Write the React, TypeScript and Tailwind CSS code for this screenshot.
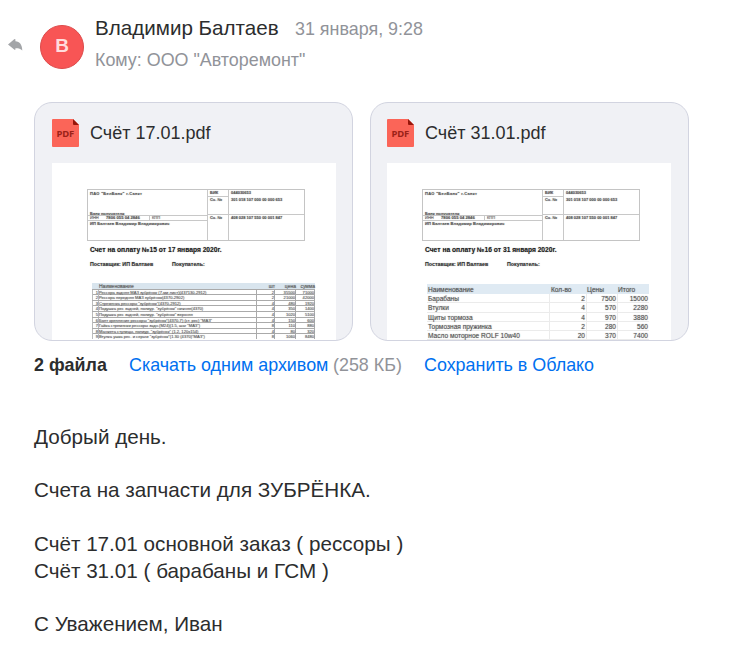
import React from "react";

const orderRows: string[][] = [
  ["1", "Рессора задняя МАЗ зубрёнок (7-ми лист)(437130-2912)", "2", "35500", "71000"],
  ["2", "Рессора передняя МАЗ зубрёнок(4370-2902)", "2", "21000", "42000"],
  ["3", "Стремянка рессоры \"зубрёнок\"(4370-2912)", "4", "480", "1920"],
  ["4", "Подушка рес задней, полиур. \"зубрёнок\" нижняя(4370)", "4", "350", "1400"],
  ["5", "Подушка рес задней, полиур. \"зубрёнок\" верхняя", "4", "1020", "5100"],
  ["6", "Болт крепления рессоры \"зубрёнок\"(4370-7) (ст. рес) \"МАЗ\"", "4", "150", "600"],
  ["7", "Гайка стремянки рессоры задн.(М24)(1.5, шаг \"МАЗ\")", "8", "110", "880"],
  ["8", "Манжета ступицы, полиур. \"зубрёнок\" (1.2, 120x154)", "4", "80", "320"],
  ["9", "Втулка ушка рес. и серьги \"зубрёнок\"(1.30 (4370)\"МАЗ\")", "8", "1060", "8480"],
];

const partsRows: string[][] = [
  ["Барабаны", "2", "7500", "15000"],
  ["Втулки", "4", "570", "2280"],
  ["Щиты тормоза", "4", "970", "3880"],
  ["Тормозная пружинка", "2", "280", "560"],
  ["Масло моторное ROLF 10w40", "20", "370", "7400"],
];

function BankTable() {
  const small = "text-[4px] leading-[5px] font-bold text-[#555]";
  return (
    <div className="ml-[35px] flex h-[52px] w-[218px] whitespace-nowrap border border-[#c4c4c4]">
      <div className="flex w-[120px] flex-col border-r border-[#c8c8c8]">
        <div className={`flex h-[25px] flex-col justify-between pl-[2px] ${small}`}>
          <span className="pt-[1px] tracking-[0.3px]">ПАО "БелБанк" г.Санкт</span>
          <span className="-mb-px tracking-[0.05px]">Банк получателя</span>
        </div>
        <div className={`flex h-[6px] shrink-0 border-y border-[#c8c8c8] ${small}`}>
          <span className="w-[18px] pl-[2px] font-normal leading-[4px]">ИНН</span>
          <span className="w-[43px] text-[4.2px] leading-[4px]">7806 055 04 2846</span>
          <span className="border-l border-[#c8c8c8] pl-[2px] font-normal leading-[4px]">КПП</span>
        </div>
        <span className={`pl-[2px] tracking-[0.1px] ${small}`}>ИП Балтаев Владимир Владимирович</span>
      </div>
      <div className={`flex w-[21px] flex-col border-r border-[#c8c8c8] ${small}`}>
        <span className="h-[7px] border-b border-[#c8c8c8] pl-[2px]">БИК</span>
        <span className="h-[18px] border-b border-[#c8c8c8] pl-[2px]">Сч. №</span>
        <span className="pl-[2px]">Сч. №</span>
      </div>
      <div className={`flex flex-1 flex-col ${small}`}>
        <span className="h-[7px] pl-[2px]">044030653</span>
        <span className="h-[18px] border-b border-[#c8c8c8] pl-[2px]">301 018 107 000 00 000 653</span>
        <span className="pl-[2px]">408 028 107 550 00 001 847</span>
      </div>
    </div>
  );
}

function OrderTable() {
  return (
    <div className="ml-[40px] mt-[14px] w-[223px] text-[5px] text-[#555]">
      <div className="grid h-[5.6px] grid-cols-[7px_158px_18px_21px_19px] bg-[#d9e5ee] leading-[6px]">
        <span />
        <span>Наименование</span>
        <span className="text-right">шт</span>
        <span className="text-right">цена</span>
        <span className="text-right">сумма</span>
      </div>
      {orderRows.map((r) => (
        <div
          key={r[0]}
          className="grid h-[5.6px] grid-cols-[7px_158px_18px_21px_19px] whitespace-nowrap border-t border-[#aaa] text-[4.1px] leading-[5px]"
        >
          <span className="border-x border-[#bbb] text-right">{r[0]}</span>
          <span className="overflow-hidden border-r border-[#aaa]">{r[1]}</span>
          <span className="border-r border-[#aaa] text-right">{r[2]}</span>
          <span className="border-r border-[#aaa] text-right">{r[3]}</span>
          <span className="border-r border-[#aaa] text-right">{r[4]}</span>
        </div>
      ))}
    </div>
  );
}

function PartsTable() {
  return (
    <div className="ml-[40px] mt-[15px] w-[222px] text-[6.6px] text-[#555]">
      <div className="grid h-[10px] grid-cols-[123px_37px_31px_31px] bg-[#dfeaf3] leading-[11px]">
        <span className="pl-px">Наименование</span>
        <span className="pl-px">Кол-во</span>
        <span>Цены</span>
        <span>Итого</span>
      </div>
      {partsRows.map((r) => (
        <div
          key={r[0]}
          className="grid h-[9.3px] grid-cols-[123px_37px_31px_31px] whitespace-nowrap border-b border-[#ebebeb] leading-[10px]"
        >
          <span className="border-r border-[#ebebeb] pl-px">{r[0]}</span>
          <span className="border-r border-[#ebebeb] pr-px text-right">{r[1]}</span>
          <span className="border-r border-[#ebebeb] pr-px text-right">{r[2]}</span>
          <span className="pr-px text-right">{r[3]}</span>
        </div>
      ))}
    </div>
  );
}

function PdfIcon() {
  return (
    <svg width="27" height="28" viewBox="0 0 27 28" className="shrink-0">
      <path d="M1 0H21L27 6V27a1 1 0 0 1-1 1H1a1 1 0 0 1-1-1V1a1 1 0 0 1 1-1Z" fill="#fb6558" />
      <path d="M21 0L27 6H22a1 1 0 0 1-1-1Z" fill="#97160b" />
      <text x="4.6" y="17.6" textLength="17.6" className="fill-[#9c2218] font-['Noto_Sans',sans-serif] text-[9.5px] font-bold">
        PDF
      </text>
    </svg>
  );
}

function Attachment({ name, title, pad, children }: { name: string; title: string; pad: string; children: React.ReactNode }) {
  return (
    <div className={`h-[239px] w-[319px] overflow-hidden rounded-[18px] border border-[#d2d4e0] bg-[#f0f1f5] ${pad}`}>
      <div className="flex h-[60px] items-center pb-px">
        <PdfIcon />
        <span className="ml-[11px] text-[18px] leading-[24px]">{name}</span>
      </div>
      <div className="h-[177px] w-[284px] overflow-hidden bg-white">
        <div className="pt-[26px] [text-shadow:0_0_1px_rgba(60,60,60,0.55)]">
          <BankTable />
          <div className="ml-[38px] mt-[4px] whitespace-nowrap text-[6.7px] leading-[9px] font-bold text-[#222]">{title}</div>
          <div className="ml-[38px] mt-[6px] flex whitespace-nowrap text-[5.3px] leading-[9px] font-bold text-[#333]">
            <span className="w-[82px]">Поставщик: ИП Балтаев</span>
            <span>Покупатель:</span>
          </div>
          {children}
        </div>
      </div>
    </div>
  );
}

export default function App() {
  return (
    <main className="h-[661px] w-[752px] overflow-hidden bg-white font-['Liberation_Sans',Arial,sans-serif] text-[#2c2d2e]">
      <header className="flex h-[102px] pl-[8px] pt-[14px]">
        <svg width="15" height="13" viewBox="0 0 15 13" className="mt-[24px]">
          <path d="M0 6.6L6.2 1.2Q7.4.4 7.4 1.6V3.2C11.8 3.5 14.2 6.8 14.3 12.4C12.5 10.6 10.5 10.1 7.4 10.2V11.2Q7.4 12.5 6.2 11.6Z" fill="#a3a5a8" />
        </svg>
        <div className="ml-[17px] mt-[11px] flex size-[44px] items-center justify-center rounded-full border border-[#dd4b4b] bg-[#f85555] pb-px text-[19px] font-bold text-[#ffdddd]">
          В
        </div>
        <div className="ml-[11px] whitespace-nowrap">
          <div className="flex items-baseline leading-[28px]">
            <span className="w-[200px] text-[20.6px]">Владимир Балтаев</span>
            <span className="text-[17.9px] text-[#919399]">31 января, 9:28</span>
          </div>
          <div className="mt-[4px] text-[17.9px] leading-[26px] text-[#919399]">Кому: ООО "Авторемонт"</div>
        </div>
      </header>

      <section className="ml-[34px] flex gap-[17px]">
        <Attachment name="Счёт 17.01.pdf" title="Счет на оплату №15  от 17 января 2020г." pad="pl-[17px]">
          <OrderTable />
        </Attachment>
        <Attachment name="Счёт 31.01.pdf" title="Счет на оплату №16  от 31 января 2020г." pad="pl-[16px]">
          <PartsTable />
        </Attachment>
      </section>

      <div className="ml-[34px] mt-[11px] flex whitespace-nowrap text-[17.9px] leading-[26px]">
        <span className="w-[95px] font-bold">2 файла</span>
        <span className="w-[204px] text-[#0070f0]">Скачать одним архивом</span>
        <span className="w-[91px] text-[#919399]">(258 КБ)</span>
        <span className="text-[#0070f0]">Сохранить в Облако</span>
      </div>

      <article className="ml-[34px] mt-[46px] text-[20.67px] leading-[26.7px]">
        <p>Добрый день.</p>
        <br />
        <p>Счета на запчасти для ЗУБРЁНКА.</p>
        <br />
        <p>Счёт 17.01 основной заказ ( рессоры )</p>
        <p>Счёт 31.01 ( барабаны и ГСМ )</p>
        <br />
        <p>С Уважением, Иван</p>
      </article>
    </main>
  );
}
